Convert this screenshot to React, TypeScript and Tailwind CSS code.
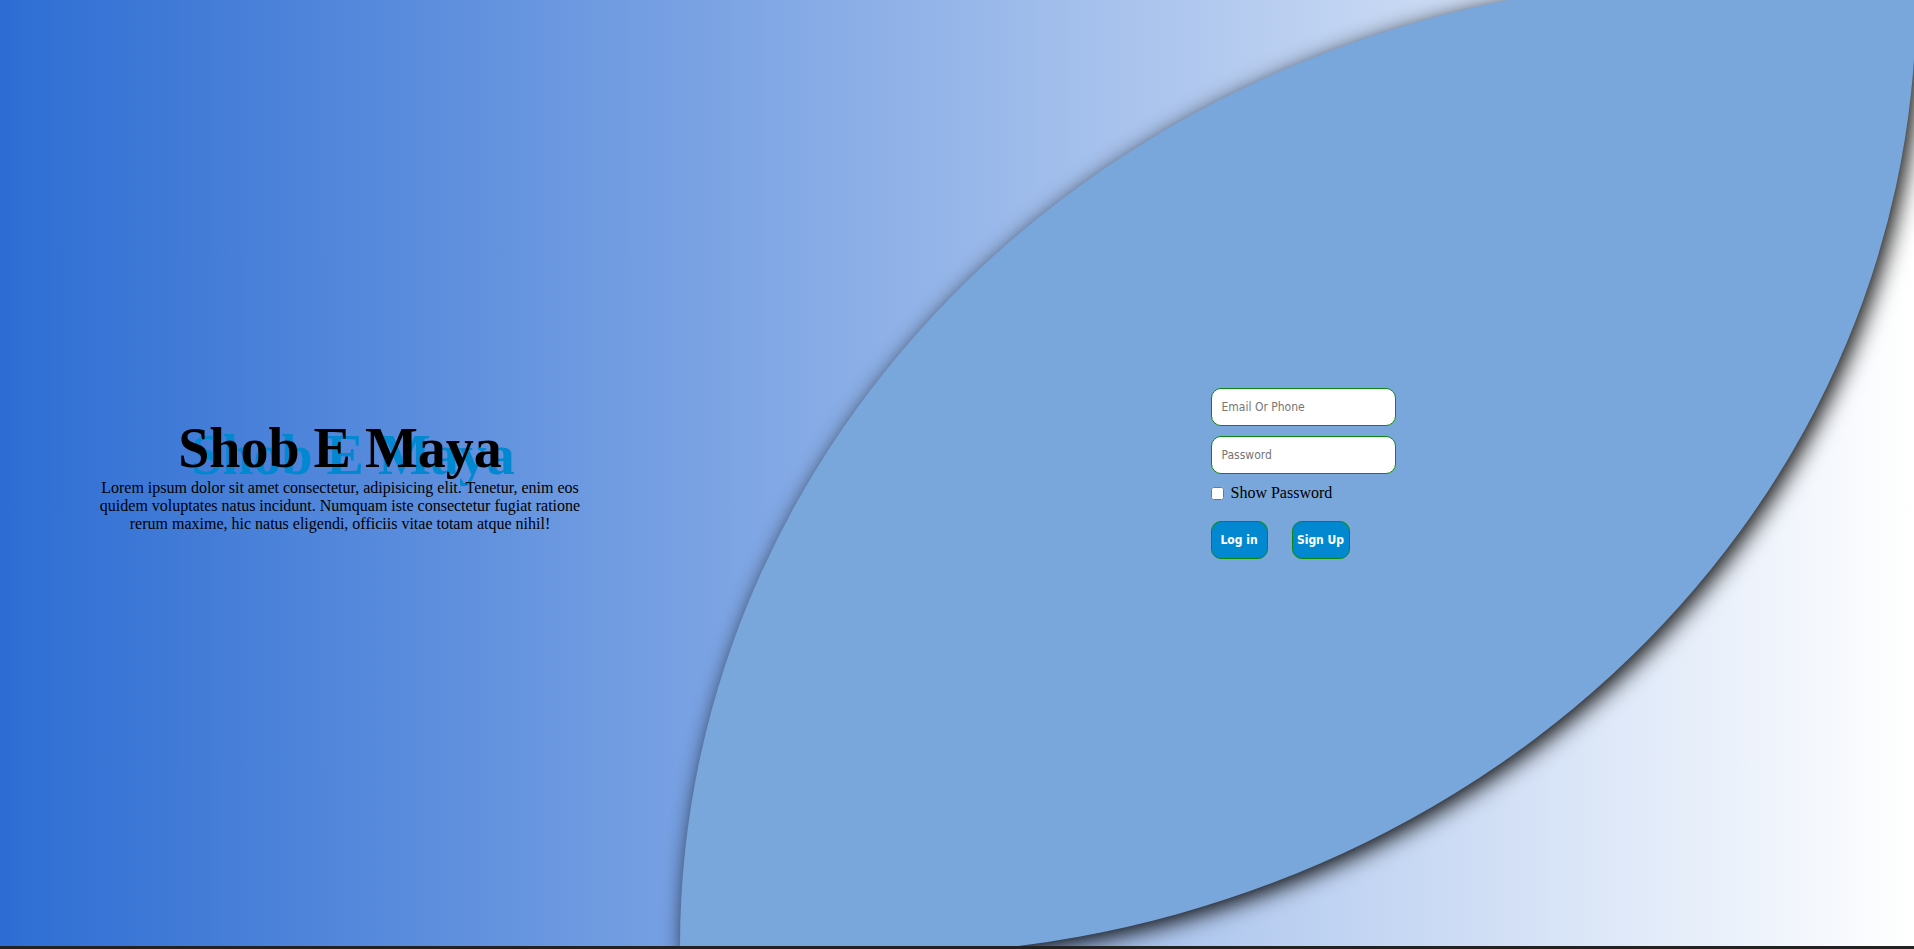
export default function App() {
  return (
    <div className="flex h-screen w-full overflow-hidden border-b-[3px] border-[#222] bg-[linear-gradient(to_right,#2d6dd3,#ffffff)] font-['Liberation_Serif',serif]">
      <section className="flex w-[680px] shrink-0 flex-col items-center justify-center pt-[2px]">
        <h1 className="text-[56px] leading-[64px] font-bold text-black [text-shadow:13px_7px_0_#0288d1]">
          Shob E Maya
        </h1>
        <p className="mt-[-1px] w-[486px] text-center text-base leading-[18px] text-black">
          Lorem ipsum dolor sit amet consectetur, adipisicing elit. Tenetur, enim eos quidem voluptates natus incidunt.
          Numquam iste consectetur fugiat ratione rerum maxime, hic natus eligendi, officiis vitae totam atque nihil!
        </p>
      </section>
      <section className="mt-[-22px] flex h-[977px] w-[1236px] shrink-0 items-center justify-center self-start rounded-tl-[1050px_968px] rounded-br-[1040px_955px] bg-[#7aa7db] pt-[14px] pl-[10px] shadow-[5px_5px_22px_rgba(0,0,0,0.95)]">
        <form className="flex w-[185px] flex-col">
          <input
            type="text"
            placeholder="Email Or Phone"
            className="h-[38px] w-full rounded-[10px] border border-[#0a8a0a] bg-white px-[10px] font-['DejaVu_Sans_Condensed','DejaVu_Sans',sans-serif] text-[12px] outline-none placeholder:text-[#757575]"
          />
          <input
            type="password"
            placeholder="Password"
            className="mt-[10px] h-[38px] w-full rounded-[10px] border border-[#0a8a0a] bg-white px-[10px] font-['DejaVu_Sans_Condensed','DejaVu_Sans',sans-serif] text-[12px] outline-none placeholder:text-[#757575]"
          />
          <label className="mt-[10px] flex items-center gap-[7px] text-base leading-[18px] text-black">
            <input type="checkbox" className="m-0 h-[13px] w-[13px]" />
            Show Password
          </label>
          <div className="mt-[19px] flex gap-[24px]">
            <button
              type="button"
              className="h-[38px] w-[57px] rounded-[10px] border border-[#0a8a0a] bg-[#0288d1] font-['DejaVu_Sans_Condensed','DejaVu_Sans',sans-serif] text-[12px] font-bold text-white"
            >
              Log in
            </button>
            <button
              type="button"
              className="h-[38px] w-[58px] rounded-[10px] border border-[#0a8a0a] bg-[#0288d1] font-['DejaVu_Sans_Condensed','DejaVu_Sans',sans-serif] text-[12px] font-bold text-white"
            >
              Sign Up
            </button>
          </div>
        </form>
      </section>
    </div>
  )
}
